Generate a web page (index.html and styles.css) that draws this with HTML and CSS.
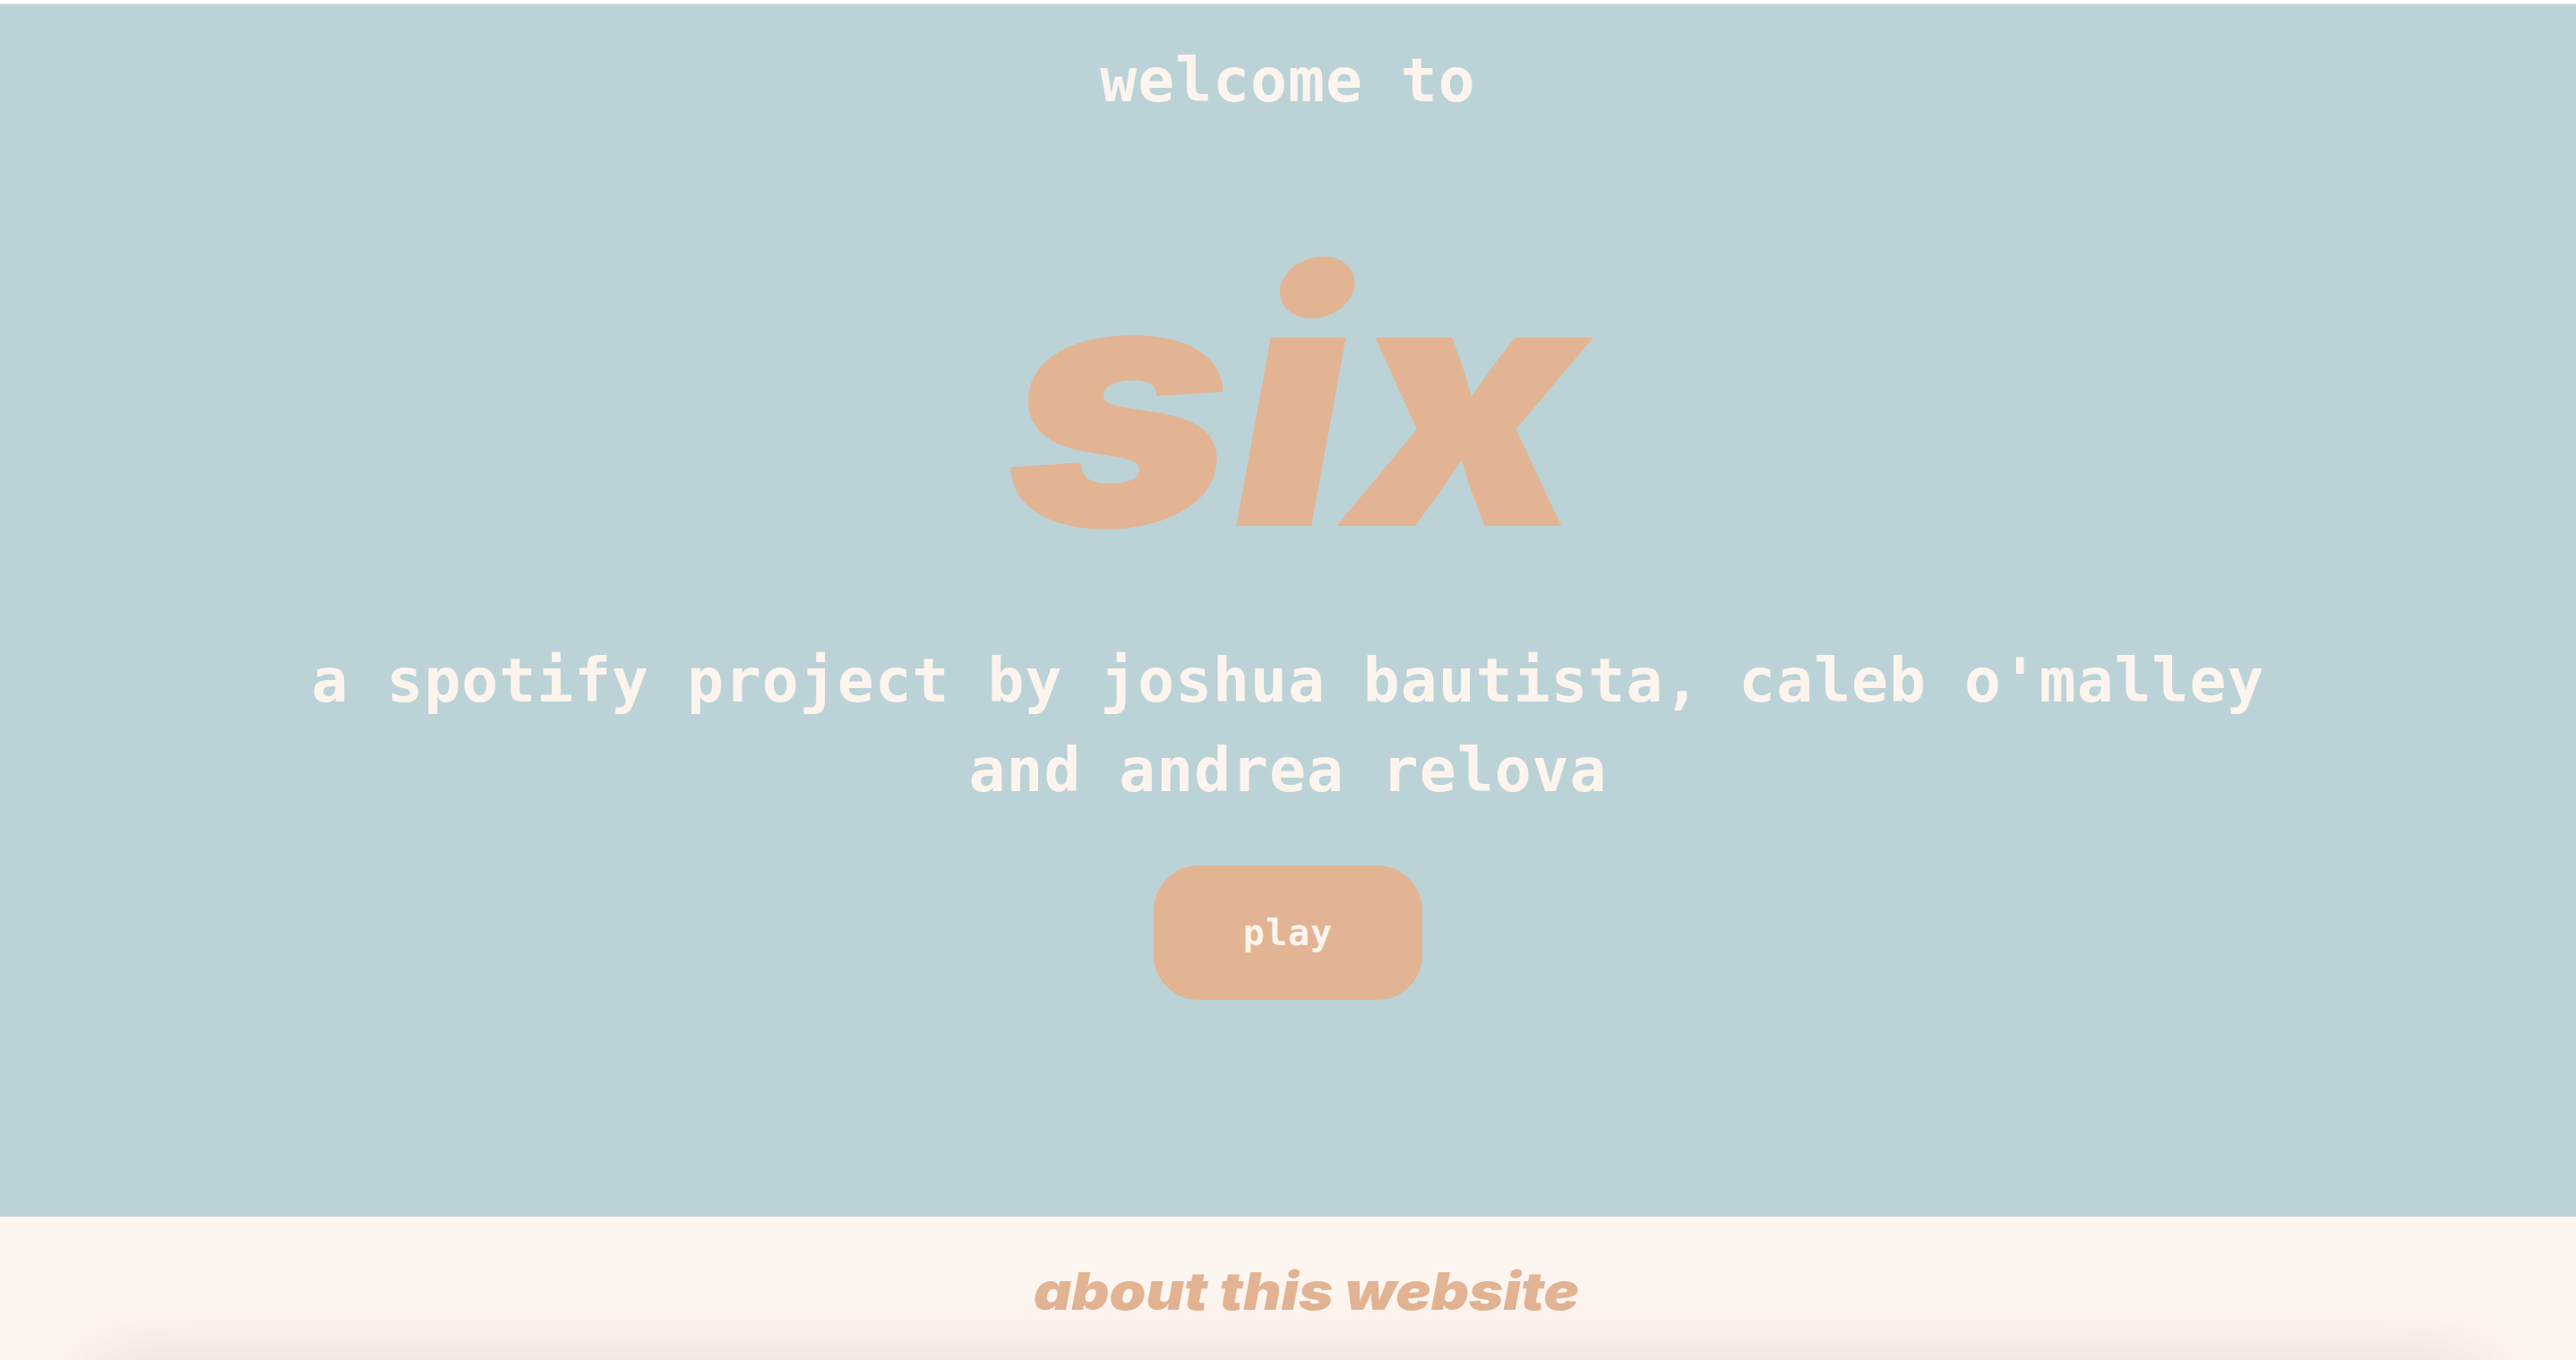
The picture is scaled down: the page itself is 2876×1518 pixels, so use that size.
FILE: index.html
```html
<!DOCTYPE html>
<html lang="en">
<head>
<meta charset="utf-8">
<title>six</title>
<link rel="stylesheet" href="styles.css">
</head>
<body>
  <div class="topline"></div>
  <section class="hero">
    <h2 class="welcome">welcome to</h2>
    <h1 class="logo"><span class="logo-text">six</span></h1>
    <p class="credits">a spotify project by joshua bautista, caleb o'malley<br>and andrea relova</p>
    <button class="play" type="button">play</button>
  </section>
  <section class="about">
    <h2 class="about-title"><span class="about-text">about this website</span></h2>
  </section>
  <div class="about-card"></div>
</body>
</html>
```

FILE: styles.css
```css
html, body {
  margin: 0;
  padding: 0;
  background: #ffffff;
}
body {
  overflow: hidden;
  height: 1518px;
}
.topline {
  height: 4px;
  border-bottom: 2px solid #d9d9d9;
  background: #ffffff;
}
.hero {
  height: 1352px;
  box-sizing: border-box;
  background: #bbd3d7;
  display: flex;
  flex-direction: column;
  align-items: center;
  padding-top: 50px;
  color: #fdf4ee;
  font-family: "DejaVu Sans Mono", "Liberation Mono", monospace;
}
.welcome {
  margin: 0;
  font-size: 68px;
  line-height: 68px;
  font-weight: 700;
  letter-spacing: 1px;
}
.logo {
  margin: 131px 0 0;
  font-family: "Inter", "Liberation Sans", sans-serif;
  font-weight: 900;
  font-style: italic;
  font-size: 385px;
  line-height: 385px;
  color: #e2b493;
}
.logo-text {
  display: inline-block;
  transform: translateX(9px) scaleX(1.11);
  letter-spacing: 2px;
}
.credits {
  margin: 70px 0 0;
  font-size: 68px;
  line-height: 100px;
  font-weight: 700;
  letter-spacing: 1px;
  text-align: center;
}
.play {
  margin-top: 56px;
  width: 300px;
  height: 150px;
  border: none;
  border-radius: 50px;
  background: #e2b493;
  color: #fdf4ee;
  font-family: "DejaVu Sans Mono", "Liberation Mono", monospace;
  font-weight: 700;
  font-size: 40px;
  letter-spacing: 1px;
  padding: 0;
}
.about {
  background: #fdf5ef;
  height: 160px;
  padding-top: 54px;
  box-sizing: border-box;
  text-align: center;
  position: relative;
  z-index: 0;
}
.about-title {
  margin: 0;
  font-family: "Inter", "Liberation Sans", sans-serif;
  font-weight: 900;
  font-style: italic;
  font-size: 58px;
  line-height: 58px;
  color: #e2b493;
}
.about-text {
  display: inline-block;
  transform: translateX(20px) scaleX(1.13);
}
.about-card {
  margin: 0 100px;
  height: 400px;
  background: #fdf5ef;
  border-radius: 40px;
  box-shadow: 0 0 70px 10px rgba(120, 80, 50, 0.12);
  position: relative;
  z-index: 1;
}
```
